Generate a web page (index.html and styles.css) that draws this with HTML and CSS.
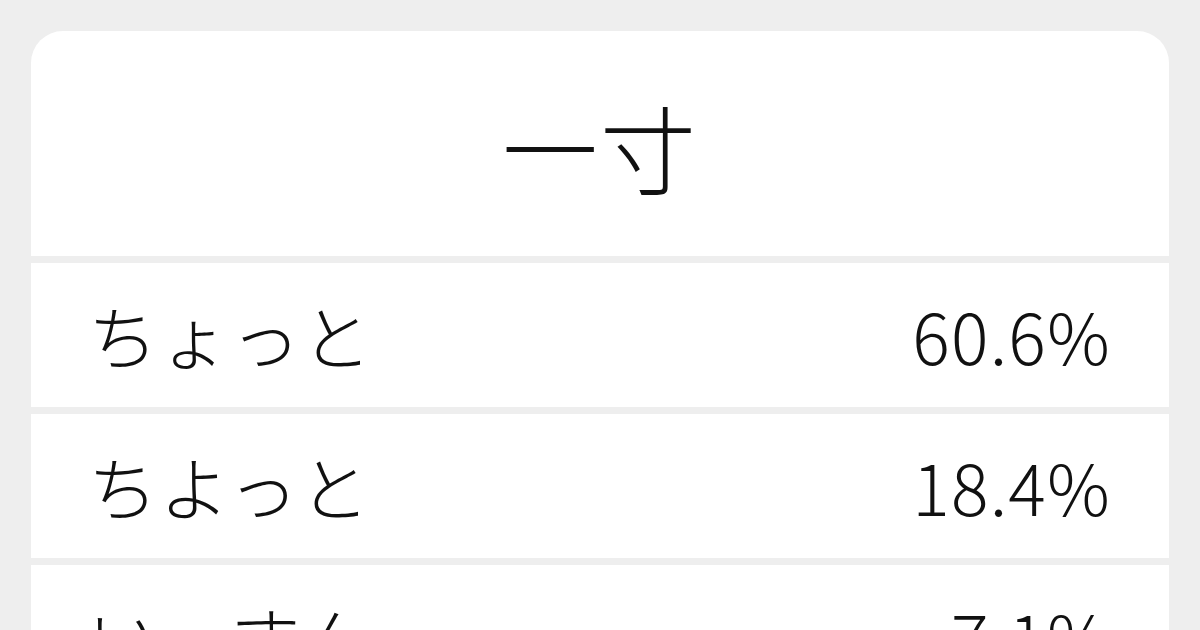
FILE: index.html
```html
<!DOCTYPE html>
<html lang="ja">
<head>
<meta charset="utf-8">
<link rel="stylesheet" href="styles.css">
</head>
<body>
<div class="card">
  <div class="title">一寸</div>
  <div class="row"><span class="reading">ちょっと</span><span class="pct">60.6%</span></div>
  <div class="row"><span class="reading">ちよっと</span><span class="pct">18.4%</span></div>
  <div class="row"><span class="reading">いっすん</span><span class="pct">7.1%</span></div>
</div>
</body>
</html>
```
FILE: styles.css
```css
html, body {
  margin: 0;
  padding: 0;
  background: #eeeeee;
  width: 1200px;
  height: 630px;
  overflow: hidden;
}
body {
  padding: 31px;
  box-sizing: border-box;
  font-family: "Noto Sans CJK JP", "Noto Sans", sans-serif;
  font-weight: 300;
  color: #111;
}
.card {
  display: flex;
  flex-direction: column;
  gap: 7px;
  border-radius: 32px;
  overflow: hidden;
}
.title {
  background: #fff;
  height: 225px;
  box-sizing: border-box;
  padding-top: 4px;
  display: flex;
  align-items: center;
  justify-content: center;
  font-size: 96px;
  letter-spacing: 2px;
}
.row {
  background: #fff;
  height: 144px;
  flex-shrink: 0;
  display: flex;
  align-items: center;
  justify-content: space-between;
  padding: 0 58px 0 57px;
  font-size: 70px;
  line-height: 1;
  letter-spacing: 1.2px;
}
```
